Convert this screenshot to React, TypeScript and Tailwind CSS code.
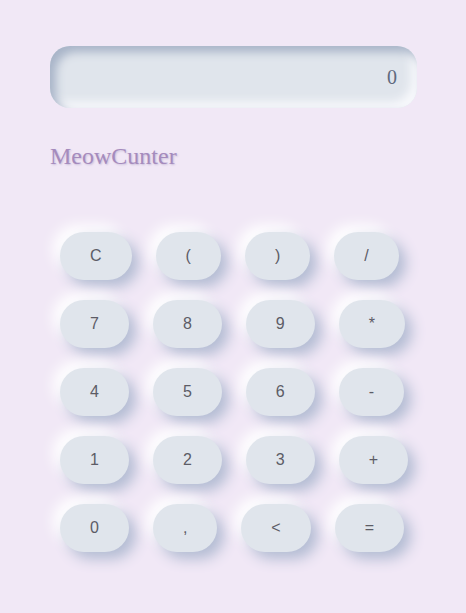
import React from "react";

const rows: string[][] = [
  ["C", "(", ")", "/"],
  ["7", "8", "9", "*"],
  ["4", "5", "6", "-"],
  ["1", "2", "3", "+"],
  ["0", ",", "<", "="],
];

export default function App() {
  return (
    <div className="min-h-screen bg-[#f1e8f6] pt-[46px] px-[50px]">
      <div className="h-[62px] w-[367px] rounded-[20px] bg-[#e0e5ec] shadow-[inset_6px_6px_10px_#a8b4c8,inset_-6px_-6px_10px_#f8f9fc] flex items-center justify-end pr-[20px] font-['Liberation_Serif',serif] text-[20px] text-[#5f6a7e]">
        0
      </div>
      <div className="mt-[30px] font-['Liberation_Serif',serif] text-[24px] text-[#a58bbd] [text-shadow:1px_1px_2px_#c8bcd8]">
        MeowCunter
      </div>
      <div className="mt-[58px] flex flex-col gap-[20px] pl-[10px]">
        {rows.map((r, i) => (
          <div key={i} className="flex gap-[24px]">
            {r.map((k) => (
              <button
                key={k}
                className="h-[48px] px-[30px] rounded-full bg-[#e0e5ec] shadow-[7px_7px_14px_#b3bcd3,-7px_-7px_14px_#ffffff] font-['Liberation_Sans',Arial,sans-serif] text-[16px] text-[#5c5c66]"
              >
                {k}
              </button>
            ))}
          </div>
        ))}
      </div>
    </div>
  );
}
